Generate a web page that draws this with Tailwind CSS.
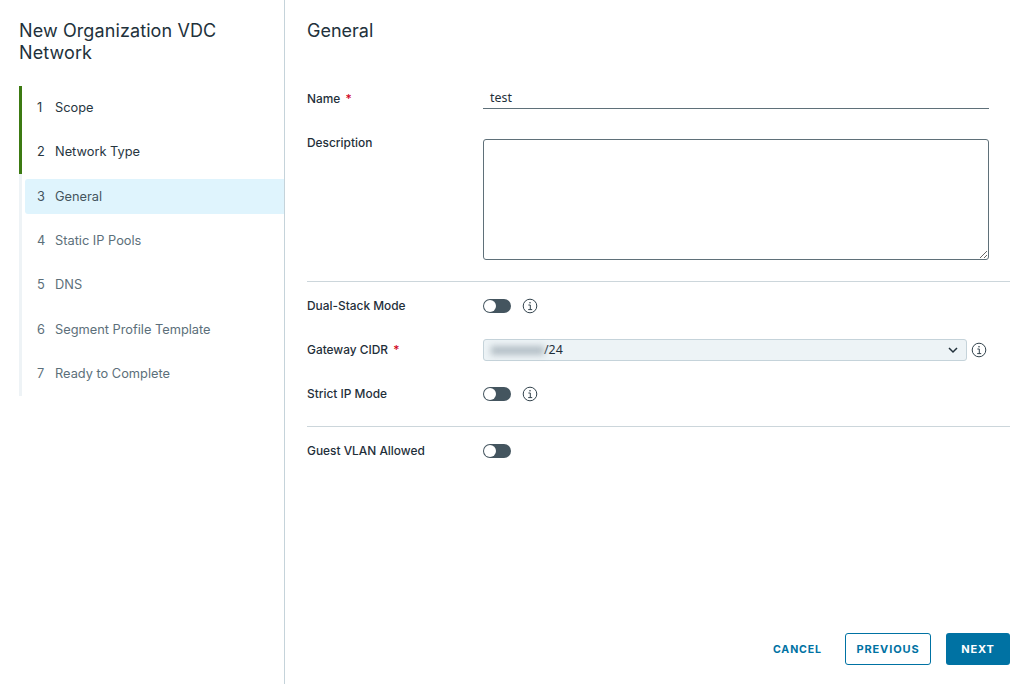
<!DOCTYPE html>
<html lang="en">
<head>
    <meta charset="UTF-8">
    <title>New Organization VDC Network</title>
    <script src="https://cdn.jsdelivr.net/npm/@tailwindcss/browser@4"></script>
</head>
<body class="bg-white font-['Inter',sans-serif] text-[#1f2f3a] antialiased">
    <div class="flex h-[684px] w-[1030px] overflow-hidden">
        <!-- wizard steps -->
        <aside class="w-[285px] shrink-0 border-r border-[#c5d3da] pt-[20px]">
            <h1 class="pl-[19px] pr-4 text-[18px] leading-[21.5px] tracking-[0.1px] text-[#22313b]">New Organization VDC Network</h1>
            <ol class="ml-[19px] mt-[22.5px] border-l-[3px] border-[#eef3f6] text-[12.8px]">
                <li class="-ml-[3px] flex h-[44.3px] items-center border-l-[3px] border-[#3c7a12] pl-[15px] text-[#27363f]"><span class="w-[18px]">1</span>Scope</li>
                <li class="-ml-[3px] flex h-[44.3px] items-center border-l-[3px] border-[#3c7a12] pl-[15px] text-[#27363f]"><span class="w-[18px]">2</span>Network Type</li>
                <li class="flex h-[44.3px] items-center pl-[3px] text-[#44545e]">
                    <div class="flex h-[35px] w-full items-center rounded-l-[3px] bg-[#dff4fd] pl-[12px]"><span class="w-[18px]">3</span>General</div>
                </li>
                <li class="flex h-[44.3px] items-center pl-[15px] text-[#5c6f7a]"><span class="w-[18px]">4</span>Static IP Pools</li>
                <li class="flex h-[44.3px] items-center pl-[15px] text-[#5c6f7a]"><span class="w-[18px]">5</span>DNS</li>
                <li class="flex h-[44.3px] items-center pl-[15px] text-[#5c6f7a]"><span class="w-[18px]">6</span>Segment Profile Template</li>
                <li class="flex h-[44.3px] items-center pl-[15px] text-[#5c6f7a]"><span class="w-[18px]">7</span>Ready to Complete</li>
            </ol>
        </aside>

        <!-- form -->
        <main class="flex flex-1 flex-col pl-[22px] pr-[20px]">
            <h2 class="mt-[20px] text-[18px] leading-[22px] text-[#22313b]">General</h2>

            <div class="mt-[45px] flex h-[22px] items-center">
                <label class="w-[176px] pt-[2px] text-[11.9px] font-medium">Name <span class="ml-[2px] text-[#d0021b]">*</span></label>
                <div class="flex h-[22px] w-[506px] items-center border-b border-[#5f7079] px-[7px] pt-[2px] font-['Noto_Sans',sans-serif] text-[12.4px]">test</div>
            </div>

            <div class="mt-[30px] flex">
                <label class="w-[176px] text-[11.9px] font-medium leading-[7px]">Description</label>
                <textarea class="h-[121px] w-[506px] rounded-[3px] border border-[#5f7079]"></textarea>
            </div>

            <hr class="mt-[21px] border-[#ccd6db]">

            <div class="mt-[14px] flex h-[20px] items-center">
                <label class="w-[176px] text-[11.9px] font-medium">Dual-Stack Mode</label>
                <div class="relative h-[14px] w-[28px] rounded-full bg-[#44555f]"><span class="absolute left-[1px] top-[1px] h-[12px] w-[12px] rounded-full bg-white"></span></div>
                <svg class="ml-[11px] h-[16px] w-[16px]" viewBox="0 0 16 16" fill="none" stroke="#33434d" stroke-width="1"><circle cx="8" cy="8" r="6.8"/><path d="M6.4 7h1.9v4.6M6.2 11.6h4"/><circle cx="8" cy="4.7" r=".8" fill="#33434d" stroke="none"/></svg>
            </div>

            <div class="mt-[24px] flex h-[20px] items-center">
                <label class="w-[176px] text-[11.9px] font-medium">Gateway CIDR <span class="ml-[2px] text-[#d0021b]">*</span></label>
                <div class="flex h-[22px] w-[484px] items-center rounded-[3px] border border-[#c5d3da] bg-[#edf3f6] pl-[7px] pr-[8px] font-['Noto_Sans',sans-serif] text-[12.4px]">
                    <span class="h-[9px] w-[53px] bg-[#b4bfc6] blur-[3px]"></span><span>/24</span>
                    <svg class="ml-auto h-[10px] w-[10px]" viewBox="0 0 10 10" fill="none" stroke="#22313b" stroke-width="1.5"><path d="M1 3l4 4 4-4"/></svg>
                </div>
                <svg class="ml-[4px] h-[16px] w-[16px]" viewBox="0 0 16 16" fill="none" stroke="#33434d" stroke-width="1"><circle cx="8" cy="8" r="6.8"/><path d="M6.4 7h1.9v4.6M6.2 11.6h4"/><circle cx="8" cy="4.7" r=".8" fill="#33434d" stroke="none"/></svg>
            </div>

            <div class="mt-[24px] flex h-[20px] items-center">
                <label class="w-[176px] text-[11.9px] font-medium">Strict IP Mode</label>
                <div class="relative h-[14px] w-[28px] rounded-full bg-[#44555f]"><span class="absolute left-[1px] top-[1px] h-[12px] w-[12px] rounded-full bg-white"></span></div>
                <svg class="ml-[11px] h-[16px] w-[16px]" viewBox="0 0 16 16" fill="none" stroke="#33434d" stroke-width="1"><circle cx="8" cy="8" r="6.8"/><path d="M6.4 7h1.9v4.6M6.2 11.6h4"/><circle cx="8" cy="4.7" r=".8" fill="#33434d" stroke="none"/></svg>
            </div>

            <hr class="mt-[22px] border-[#ccd6db]">

            <div class="mt-[14px] flex h-[20px] items-center">
                <label class="w-[176px] text-[11.9px] font-medium">Guest VLAN Allowed</label>
                <div class="relative h-[14px] w-[28px] rounded-full bg-[#44555f]"><span class="absolute left-[1px] top-[1px] h-[12px] w-[12px] rounded-full bg-white"></span></div>
            </div>

            <div class="mt-auto mb-[19px] flex items-center justify-end text-[11px] font-bold tracking-[0.08em] text-[#0072a3]">
                <button class="mr-[23px] pt-[1px] text-[10.6px]">CANCEL</button>
                <button class="mr-[15px] h-[32px] w-[86px] rounded-[3px] border border-[#0072a3]">PREVIOUS</button>
                <button class="h-[32px] w-[64px] rounded-[3px] bg-[#0072a3] text-white">NEXT</button>
            </div>
        </main>
    </div>
</body>
</html>
